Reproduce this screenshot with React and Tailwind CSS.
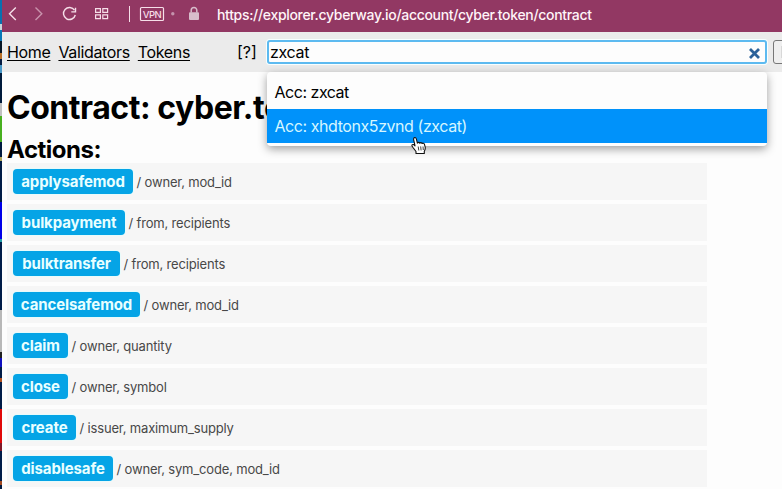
import React from "react";

const actions = [
  { name: "applysafemod", args: "owner, mod_id", width: "w-[120px]" },
  { name: "bulkpayment", args: "from, recipients", width: "w-[112px]" },
  { name: "bulktransfer", args: "from, recipients", width: "w-[107px]" },
  { name: "cancelsafemod", args: "owner, mod_id", width: "w-[127px]" },
  { name: "claim", args: "owner, quantity", width: "w-[55px]" },
  { name: "close", args: "owner, symbol", width: "w-[55px]" },
  { name: "create", args: "issuer, maximum_supply", width: "w-[63px]" },
  { name: "disablesafe", args: "owner, sym_code, mod_id", width: "w-[100px]" },
];

// Sliver of the desktop visible beside the browser window
function DesktopEdge() {
  return (
    <div className="flex h-full w-0.5 shrink-0 flex-col overflow-hidden bg-[#001a40]">
      <div className="h-6 shrink-0 bg-[#0870b0]" />
      <div className="h-1.5 shrink-0 bg-[#c8d4dc]" />
      <div className="h-[11px] shrink-0 bg-[#0878b8]" />
      <div className="h-3 shrink-0 bg-[#051525]" />
      <div className="h-1.5 shrink-0 bg-[#b87028]" />
      <div className="h-1.5 shrink-0 bg-[#041a40]" />
      <div className="h-2 shrink-0 bg-[#4798c8]" />
      <div className="h-[30px] shrink-0 bg-[#001b3c]" />
      <div className="h-[13px] shrink-0 bg-[#c0c0c0]" />
      <div className="h-[26px] shrink-0 bg-[#48b020]" />
      <div className="h-[15px] shrink-0 bg-[#001a40]" />
      <div className="h-1 shrink-0 bg-[#b0a860]" />
      <div className="h-[41px] shrink-0 bg-[#001b45]" />
      <div className="h-[37px] shrink-0 bg-[#0000e8]" />
      <div className="h-[3px] shrink-0 bg-[#20a0a8]" />
      <div className="h-[68px] shrink-0 bg-[#001c48]" />
      <div className="h-[42px] shrink-0 bg-[#b8b8b8]" />
      <div className="h-1.5 shrink-0 bg-[#202020]" />
      <div className="h-[9px] shrink-0 bg-[#1010c0]" />
      <div className="h-[11px] shrink-0 bg-[#001c48]" />
      <div className="h-1 shrink-0 bg-[#b05020]" />
      <div className="h-[27px] shrink-0 bg-[#001c48]" />
      <div className="h-[34px] shrink-0 bg-[#e00808]" />
      <div className="h-2 shrink-0 bg-[#801828]" />
      <div className="h-[30px] shrink-0 bg-[#001c48]" />
      <div className="h-1 shrink-0 bg-[#a04820]" />
    </div>
  );
}

function BrowserBar() {
  return (
    <header className="flex h-8 shrink-0 items-start bg-[#923863] text-[#f6dfe9]">
      <svg className="h-8 w-[215px] shrink-0" viewBox="2 0 215 32" fill="none" stroke="currentColor" strokeWidth="1.4">
        <path d="M15.8 7.5 9.5 13.8l6.3 6.3" />
        <path d="m35.5 7.5 6.3 6.3-6.3 6.3" opacity=".55" />
        <path d="M74.5 10.2A6 6 0 1 0 75.3 15" />
        <path d="M75.5 7.7v4.2h-4.2" />
        <path d="M95.6 8.6h4.8v3.8h-4.8zM102.8 8.6h4.8v3.8h-4.8zM95.6 14.8h4.8v3.8h-4.8zM102.8 14.8h4.8v3.8h-4.8z" strokeWidth="1.2" />
        <path d="M129.5 6v16" strokeWidth="1" />
        <rect x="140.5" y="7.5" width="23" height="13" rx="1" strokeWidth="1.2" />
        <text x="142.8" y="17.6" fill="currentColor" stroke="none" fontSize="9.5" fontWeight="500" textLength="19" fontFamily="Inter, sans-serif">VPN</text>
        <circle cx="172.8" cy="13.8" r="1.7" fill="#c493ad" stroke="none" />
        <rect x="189" y="12.3" width="10" height="7.7" rx="1" fill="#d8bccb" stroke="none" />
        <path d="M191.2 12.5v-2.3a2.8 2.8 0 0 1 5.6 0v2.3" stroke="#d8bccb" strokeWidth="1.5" />
      </svg>
      <span className="mt-[5px] text-[14px] leading-5 font-medium tracking-[-0.0225em] whitespace-nowrap text-[#fff4f8]">
        https://explorer.cyberway.io/account/cyber.token/contract
      </span>
    </header>
  );
}

function HandCursor() {
  return (
    <svg className="absolute top-[65px] left-[144px] h-[18px] w-4" viewBox="0 0 16 18" fill="#fff" stroke="#111" strokeWidth="1.1" strokeLinejoin="round">
      <path d="M5 16.5v-2L2 10.5c-1-1.4-1.6-2-.9-2.7.8-.8 1.8-.1 2.9 1L2.7 2.8c-.3-1.3.1-2 .9-2.2.9-.2 1.5.4 1.8 1.5l1 4c.4-1 1.9-1 2.4.1.5-.9 1.9-.7 2.3.3.7-.7 2-.4 2.3.7l.8 3c.4 1.7-.4 2.9-.9 4.1v2.2z" />
      <path d="m7.2 9.5.6 4M9.7 9.4l.4 4M12 9.5l.3 3.5" strokeWidth=".8" />
    </svg>
  );
}

function Search() {
  return (
    <div className="relative w-[500px] shrink-0">
      <div className="flex h-6 items-center justify-between rounded-[3px] border-2 border-[#5dbaf0] bg-[#fdfdfd] pr-[5px] pl-px ring-1 ring-[#f8ffff]">
        <span className="text-[16px] leading-5 tracking-[-0.02em]">zxcat</span>
        <svg className="mt-0.5 h-[11px] w-[11px]" viewBox="0 0 11 11" fill="none" stroke="#2b6199" strokeWidth="2.8">
          <path d="m1 1 9 9M10 1 1 10" />
        </svg>
      </div>
      <div className="absolute top-8 left-0 h-[74px] w-[500px] rounded bg-[#fdfdfd] pt-[3px] text-[16px] leading-[34px] shadow-[0_3px_10px_rgba(0,0,0,0.38)]">
        <div className="h-[34px] pl-[7.5px] tracking-[-0.03em]">Acc: zxcat</div>
        <div className="h-[34px] bg-[#0092fa] pl-[7.5px] tracking-[-0.027em] text-[#d5f6ff]">Acc: xhdtonx5zvnd (zxcat)</div>
        <HandCursor />
      </div>
    </div>
  );
}

export default function App() {
  return (
    <div className="flex h-[489px] w-[782px] overflow-hidden bg-[#fdfdfd] font-['Inter',sans-serif] text-black">
      <DesktopEdge />
      <div className="flex w-[780px] flex-col">
        <BrowserBar />
        <nav className="flex h-10 shrink-0 bg-[#ebebeb] pt-2 pl-[5px] text-[16px] leading-[25px]">
          <div className="flex w-[230px] shrink-0 gap-2 tracking-[-0.022em]">
            <a className="underline underline-offset-2">Home</a>
            <a className="underline underline-offset-2">Validators</a>
            <a className="underline underline-offset-2">Tokens</a>
          </div>
          <span className="w-[30px] shrink-0">[?]</span>
          <Search />
          <div className="ml-1.5 flex h-6 w-12 shrink-0 items-center rounded-[3px] border border-[#777] bg-[#efefef] pl-[7px]">
            <div className="h-3 w-2 bg-[#d8d8d8]" />
          </div>
        </nav>
        <main className="pl-[5px]">
          <h1 className="h-[62px] pt-4 text-[32px] leading-10 font-bold tracking-[-0.0145em]">Contract: cyber.token</h1>
          <h2 className="h-[29px] text-[24px] leading-8 font-bold tracking-[-0.02em]">Actions:</h2>
          <ul className="flex w-[700px] flex-col gap-1">
            {actions.map((action) => (
              <li key={action.name} className="flex h-[37px] shrink-0 items-center bg-[#f6f6f6] pl-1.5">
                <span className={`${action.width} flex h-[25px] shrink-0 items-center justify-center rounded bg-[#05a4e6] pt-px text-[15px] font-bold tracking-[-0.008em] text-[#e9ffff] ring-1 ring-[#dfffff]/60`}>
                  {action.name}
                </span>
                <span className="ml-[3.5px] pt-px text-[13px] leading-5 tracking-[-0.013em] text-[#484848]">/ {action.args}</span>
              </li>
            ))}
          </ul>
        </main>
      </div>
    </div>
  );
}
